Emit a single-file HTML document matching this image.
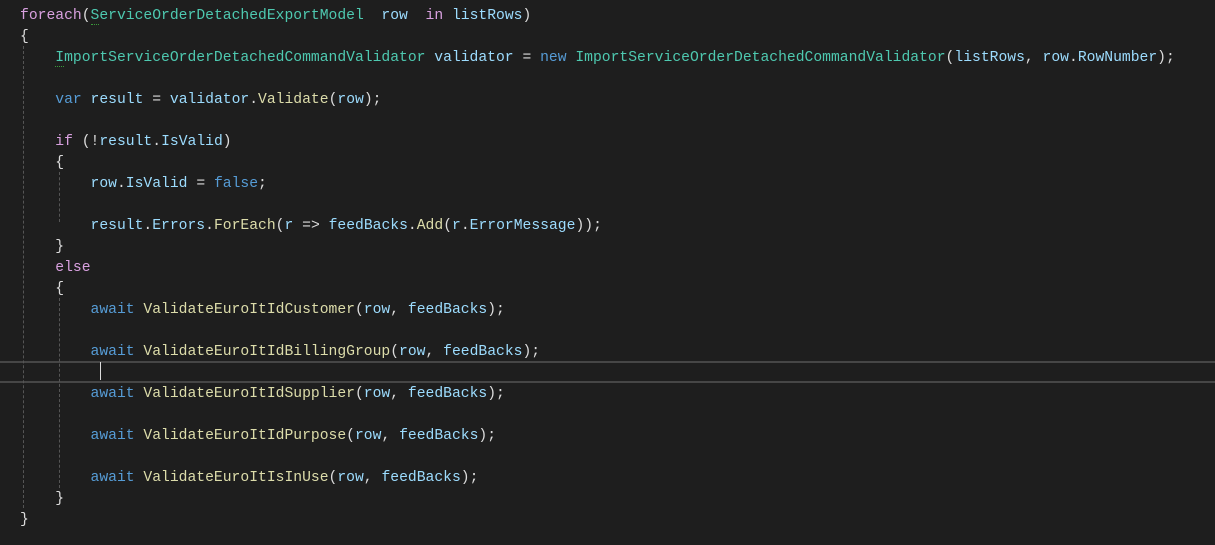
<!DOCTYPE html><html><head><style>
body{margin:0;background:#1e1e1e;width:1215px;height:545px;overflow:hidden;position:relative}
pre{margin:0;position:absolute;left:20px;top:6px;font:14.7px/21px "Liberation Mono",monospace;color:#dcdcdc;white-space:pre}
.k{color:#569cd6}.c{color:#d8a0df}.t{color:#4ec9b0}.v{color:#9cdcfe}.m{color:#dcdcaa}
.g{position:absolute;width:0;border-left:1px dashed #555}
.cl{position:absolute;left:0;right:0;top:361px;height:18px;border-top:2px solid #464646;border-bottom:2px solid #464646}
.cur{position:absolute;left:100px;top:362px;width:1px;height:18px;background:#dcdcdc}
.sq{border-bottom:1px dotted #3a9a3a}
</style></head><body>
<div class="cl"></div><div class="cur"></div>
<div class="g" style="left:23px;top:46px;height:462px"></div>
<div class="g" style="left:59px;top:172px;height:50px"></div>
<div class="g" style="left:59px;top:298px;height:190px"></div>
<pre><span class="c">foreach</span>(<span class="t"><span class="sq">S</span>erviceOrderDetachedExportModel</span>  <span class="v">row</span>  <span class="c">in</span> <span class="v">listRows</span>)
{
    <span class="t"><span class="sq">I</span>mportServiceOrderDetachedCommandValidator</span> <span class="v">validator</span> = <span class="k">new</span> <span class="t">ImportServiceOrderDetachedCommandValidator</span>(<span class="v">listRows</span>, <span class="v">row</span>.<span class="v">RowNumber</span>);

    <span class="k">var</span> <span class="v">result</span> = <span class="v">validator</span>.<span class="m">Validate</span>(<span class="v">row</span>);

    <span class="c">if</span> (!<span class="v">result</span>.<span class="v">IsValid</span>)
    {
        <span class="v">row</span>.<span class="v">IsValid</span> = <span class="k">false</span>;

        <span class="v">result</span>.<span class="v">Errors</span>.<span class="m">ForEach</span>(<span class="v">r</span> =&gt; <span class="v">feedBacks</span>.<span class="m">Add</span>(<span class="v">r</span>.<span class="v">ErrorMessage</span>));
    }
    <span class="c">else</span>
    {
        <span class="k">await</span> <span class="m">ValidateEuroItIdCustomer</span>(<span class="v">row</span>, <span class="v">feedBacks</span>);

        <span class="k">await</span> <span class="m">ValidateEuroItIdBillingGroup</span>(<span class="v">row</span>, <span class="v">feedBacks</span>);

        <span class="k">await</span> <span class="m">ValidateEuroItIdSupplier</span>(<span class="v">row</span>, <span class="v">feedBacks</span>);

        <span class="k">await</span> <span class="m">ValidateEuroItIdPurpose</span>(<span class="v">row</span>, <span class="v">feedBacks</span>);

        <span class="k">await</span> <span class="m">ValidateEuroItIsInUse</span>(<span class="v">row</span>, <span class="v">feedBacks</span>);
    }
}</pre>
</body></html>
